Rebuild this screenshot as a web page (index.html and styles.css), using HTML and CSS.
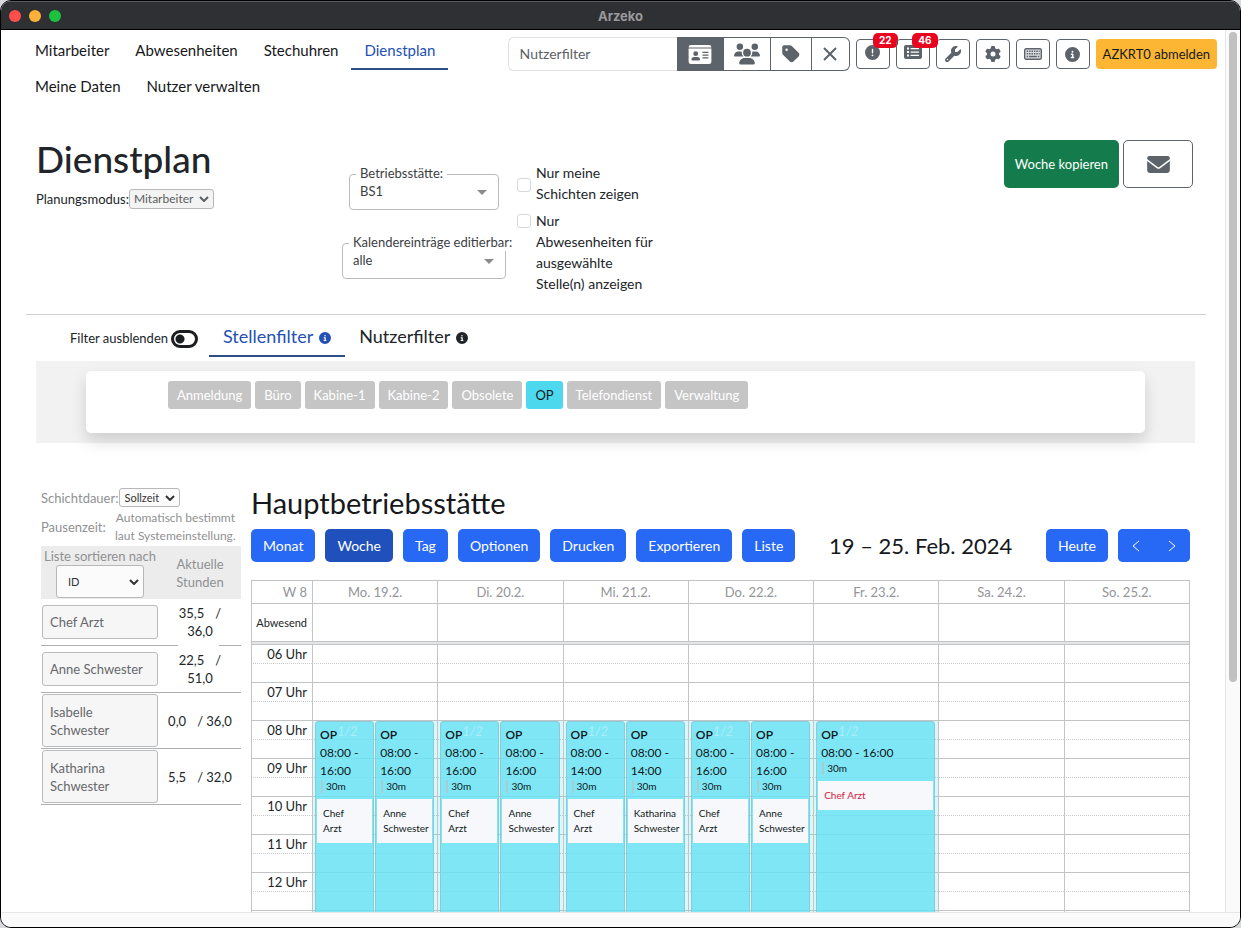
FILE: index.html
```
<!DOCTYPE html>
<html lang="de">
<head>
<meta charset="utf-8">
<title>Arzeko</title>
<link rel="stylesheet" href="styles.css">
</head>
<body>
<svg class="sprite" aria-hidden="true">
  <symbol id="i-info" viewBox="0 0 512 512"><path d="M256 512A256 256 0 1 0 256 0a256 256 0 1 0 0 512zM216 336h24V272H216c-13.3 0-24-10.7-24-24s10.7-24 24-24h48c13.3 0 24 10.7 24 24v88h8c13.3 0 24 10.7 24 24s-10.7 24-24 24H216c-13.3 0-24-10.7-24-24s10.7-24 24-24zm40-208a32 32 0 1 1 0 64 32 32 0 1 1 0-64z"/></symbol>
  <symbol id="i-alert" viewBox="0 0 512 512"><path d="M256 512A256 256 0 1 0 256 0a256 256 0 1 0 0 512zm0-384c13.3 0 24 10.7 24 24V264c0 13.3-10.7 24-24 24s-24-10.7-24-24V152c0-13.3 10.7-24 24-24zM224 352a32 32 0 1 1 64 0 32 32 0 1 1 -64 0z"/></symbol>
  <symbol id="i-wrench" viewBox="0 0 512 512"><path d="M352 320c88.4 0 160-71.6 160-160c0-15.3-2.2-30.1-6.2-44.2c-3.1-10.8-16.4-13.2-24.3-5.3l-76.8 76.8c-3 3-7.1 4.7-11.3 4.7H336c-8.8 0-16-7.2-16-16V118.6c0-4.2 1.7-8.3 4.7-11.3l76.8-76.8c7.9-7.9 5.4-21.2-5.3-24.3C382.1 2.2 367.3 0 352 0C263.6 0 192 71.6 192 160c0 19.1 3.4 37.5 9.5 54.5L19.9 396.1C7.2 408.8 0 426.1 0 444.1C0 481.6 30.4 512 67.9 512c18 0 35.3-7.2 48-19.9L297.5 310.5c17 6.2 35.4 9.5 54.5 9.5zM80 408a24 24 0 1 1 0 48 24 24 0 1 1 0-48z"/></symbol>
  <symbol id="i-gear" viewBox="0 0 512 512"><path d="M495.9 166.6c3.2 8.7 .5 18.4-6.4 24.6l-43.3 39.4c1.1 8.3 1.7 16.8 1.7 25.4s-.6 17.1-1.7 25.4l43.3 39.4c6.9 6.2 9.6 15.9 6.4 24.6c-4.4 11.9-9.7 23.3-15.8 34.3l-4.7 8.1c-6.6 11-14 21.4-22.1 31.2c-5.9 7.2-15.7 9.6-24.5 6.8l-55.7-17.7c-13.4 10.3-28.2 18.9-44 25.4l-12.5 57.1c-2 9.1-9 16.3-18.2 17.8c-13.8 2.3-28 3.5-42.5 3.5s-28.7-1.2-42.5-3.5c-9.2-1.5-16.2-8.7-18.2-17.8l-12.5-57.1c-15.8-6.5-30.6-15.1-44-25.4L83.1 425.9c-8.8 2.8-18.6 .3-24.5-6.8c-8.1-9.8-15.5-20.2-22.1-31.2l-4.7-8.1c-6.1-11-11.4-22.4-15.8-34.3c-3.2-8.7-.5-18.4 6.4-24.6l43.3-39.4C64.6 273.1 64 264.6 64 256s.6-17.1 1.7-25.4L22.4 191.2c-6.9-6.2-9.6-15.9-6.4-24.6c4.4-11.9 9.7-23.3 15.8-34.3l4.7-8.1c6.6-11 14-21.4 22.1-31.2c5.9-7.2 15.7-9.6 24.5-6.8l55.7 17.7c13.4-10.3 28.2-18.9 44-25.4l12.5-57.1c2-9.1 9-16.3 18.2-17.8C227.3 1.2 241.5 0 256 0s28.7 1.2 42.5 3.5c9.2 1.5 16.2 8.7 18.2 17.8l12.5 57.1c15.8 6.5 30.6 15.1 44 25.4l55.7-17.7c8.8-2.8 18.6-.3 24.5 6.8c8.1 9.8 15.5 20.2 22.1 31.2l4.7 8.1c6.1 11 11.4 22.4 15.8 34.3zM256 336a80 80 0 1 0 0-160 80 80 0 1 0 0 160z"/></symbol>
  <symbol id="i-tag" viewBox="0 0 448 512"><path d="M0 80V229.5c0 17 6.7 33.3 18.7 45.3l176 176c25 25 65.5 25 90.5 0L418.7 317.3c25-25 25-65.5 0-90.5l-176-176c-12-12-28.3-18.7-45.3-18.7H48C21.5 32 0 53.5 0 80zm112 32a32 32 0 1 1 0 64 32 32 0 1 1 0-64z"/></symbol>
  <symbol id="i-mail" viewBox="0 64 512 384"><path d="M48 64C21.5 64 0 85.5 0 112c0 15.1 7.1 29.3 19.2 38.4L236.8 313.6c11.4 8.5 27 8.5 38.4 0L492.8 150.4c12.1-9.1 19.2-23.3 19.2-38.4c0-26.5-21.5-48-48-48H48zM0 176V384c0 35.3 28.7 64 64 64H448c35.3 0 64-28.7 64-64V176L294.4 339.2c-22.8 17.1-54 17.1-76.8 0L0 176z"/></symbol>
  <symbol id="i-card" viewBox="0 0 24 20"><path fill-rule="evenodd" d="M2.500 0h19A2.500 2.500 0 0 1 24 2.500H0A2.500 2.500 0 0 1 2.500 0zM0 3.700h24v13.800a2.500 2.500 0 0 1-2.500 2.500h-19A2.500 2.500 0 0 1 0 17.500zM7.500 6.500a2.600 2.600 0 1 0 0 5.200 2.600 2.600 0 0 0 0-5.200zM5.800 12.700A2.800 2.800 0 0 0 3 15.500c0 .4.300.7.700.7h7.600c.4 0 .7-.3.700-.7a2.800 2.800 0 0 0-2.800-2.800zM14.600 7v1.300h6.300V7zM14.600 10v1.300h6.300V10zM14.600 13v1.300h6.300V13z"/></symbol>
  <symbol id="i-users" viewBox="0 0 640 512"><path d="M144 0a80 80 0 1 1 0 160A80 80 0 1 1 144 0zM512 0a80 80 0 1 1 0 160A80 80 0 1 1 512 0zM0 298.700C0 239.800 47.800 192 106.700 192h42.700c15.900 0 31 3.500 44.600 9.700c-1.300 7.200-1.900 14.700-1.900 22.300c0 38.200 16.800 72.500 43.300 96H21.300C9.600 320 0 310.400 0 298.700zM405.300 320c26.600-23.500 43.300-57.800 43.300-96c0-7.600-.7-15-1.900-22.300c13.600-6.300 28.700-9.700 44.600-9.700h42.700C592.200 192 640 239.800 640 298.700c0 11.800-9.600 21.300-21.300 21.300H405.300zM224 224a96 96 0 1 1 192 0 96 96 0 1 1 -192 0zM128 485.300C128 411.700 187.700 352 261.300 352H378.700C452.300 352 512 411.700 512 485.300c0 14.700-11.900 26.700-26.700 26.700H154.700c-14.700 0-26.700-11.900-26.700-26.700z"/></symbol>
  <symbol id="i-list" viewBox="0 0 18 14"><path fill-rule="evenodd" d="M2 0h14a2 2 0 0 1 2 2v10a2 2 0 0 1-2 2H2a2 2 0 0 1-2-2V2a2 2 0 0 1 2-2zM3 2.600v2h2v-2zM3 6v2h2V6zM3 9.400v2h2v-2zM6.600 3v1.300H15V3zM6.600 6.400v1.300H15V6.400zM6.600 9.800v1.300H15V9.800z"/></symbol>
  <symbol id="i-keys" viewBox="0 0 18 12"><rect x=".7" y=".7" width="16.600" height="10.600" rx="1.500" fill="#dcdedf" stroke="currentColor" stroke-width="1.400"/><path fill="none" stroke="currentColor" stroke-width="1.500" stroke-dasharray="1.500 .9" d="M2.700 3.300h13M2.700 5.800h13"/><path fill="none" stroke="currentColor" stroke-width="1.500" d="M2.700 8.600h1.500M5.100 8.600h7.800M13.800 8.600h1.500"/></symbol>
  <symbol id="i-chev" viewBox="0 0 10 6"><path d="M1 1l4 4 4-4" fill="none" stroke="currentColor" stroke-width="2"/></symbol>
  <symbol id="i-caret" viewBox="0 0 10 5"><path d="M0 0h10L5 5z"/></symbol>
</svg>
<div class="window">
  <header class="titlebar">
    <div class="lights"><i class="red"></i><i class="yellow"></i><i class="green"></i></div>
    <span>Arzeko</span>
  </header>
  <div class="viewport">
    <main class="page">
      <div class="topbar">
        <nav class="nav">
          <a href="#">Mitarbeiter</a><a href="#">Abwesenheiten</a><a href="#">Stechuhren</a><a href="#" class="active">Dienstplan</a><a href="#">Meine Daten</a><a href="#">Nutzer verwalten</a>
        </nav>
        <div class="tools">
          <div class="group">
            <input type="text" placeholder="Nutzerfilter" aria-label="Nutzerfilter">
            <button class="on w-card" aria-label="Karte"><svg width="24" height="19"><use href="#i-card"/></svg></button>
            <button class="w-users" aria-label="Gruppen"><svg width="26" height="22"><use href="#i-users"/></svg></button>
            <button class="w-tag" aria-label="Tag"><svg width="18" height="20"><use href="#i-tag"/></svg></button>
            <button class="w-close" aria-label="Leeren"><svg width="14" height="14" viewBox="0 0 14 14"><path d="M1 1l12 12M13 1L1 13" stroke="currentColor" stroke-width="2"/></svg></button>
          </div>
          <button class="tool has-badge" aria-label="Hinweise"><svg width="15" height="15"><use href="#i-alert"/></svg><span class="badge">22</span></button>
          <button class="tool has-badge" aria-label="Aufgaben"><svg width="18" height="14"><use href="#i-list"/></svg><span class="badge">46</span></button>
          <button class="tool" aria-label="Werkzeuge"><svg width="16" height="16"><use href="#i-wrench"/></svg></button>
          <button class="tool" aria-label="Einstellungen"><svg width="16" height="16"><use href="#i-gear"/></svg></button>
          <button class="tool" aria-label="Tastatur"><svg width="18" height="12"><use href="#i-keys"/></svg></button>
          <button class="tool" aria-label="Info"><svg width="15" height="15"><use href="#i-info"/></svg></button>
          <button class="logout">AZKRT0 abmelden</button>
        </div>
      </div>

      <section class="head">
        <div class="head-title">
          <h1>Dienstplan</h1>
          <div class="mode"><label for="mode">Planungsmodus:</label><span class="pick small grey"><select id="mode"><option>Mitarbeiter</option></select><svg width="10" height="6"><use href="#i-chev"/></svg></span></div>
        </div>
        <div class="fields">
          <div class="field site"><label for="site">Betriebsstätte:</label><select id="site"><option>BS1</option></select><svg width="10" height="5"><use href="#i-caret"/></svg></div>
          <div class="field edit"><label for="edit">Kalendereinträge editierbar:</label><select id="edit"><option>alle</option></select><svg width="10" height="5"><use href="#i-caret"/></svg></div>
        </div>
        <div class="checks">
          <label class="mid"><input type="checkbox"><span>Nur meine<br>Schichten zeigen</span></label>
          <label><input type="checkbox"><span>Nur<br>Abwesenheiten für<br>ausgewählte<br>Stelle(n) anzeigen</span></label>
        </div>
        <div class="head-actions">
          <button class="copy">Woche kopieren</button>
          <button class="mail" aria-label="E-Mail"><svg width="23" height="17"><use href="#i-mail"/></svg></button>
        </div>
      </section>

      <section class="filters">
        <div class="filter-head">
          <label class="switch">Filter ausblenden <input type="checkbox" role="switch"></label>
          <a href="#" class="tab active">Stellenfilter <svg width="12" height="12"><use href="#i-info"/></svg></a>
          <a href="#" class="tab">Nutzerfilter <svg width="12" height="12"><use href="#i-info"/></svg></a>
        </div>
        <div class="filter-panel"><div class="chips">
          <button>Anmeldung</button><button>Büro</button><button>Kabine-1</button><button>Kabine-2</button><button>Obsolete</button><button class="on">OP</button><button>Telefondienst</button><button>Verwaltung</button>
        </div></div>
      </section>

      <section class="plan">
        <aside class="staff">
          <div class="opt"><label for="dur">Schichtdauer:</label><span class="pick tiny"><select id="dur"><option>Sollzeit</option></select><svg width="10" height="6"><use href="#i-chev"/></svg></span></div>
          <div class="opt pause"><span>Pausenzeit:</span><p>Automatisch bestimmt<br>laut Systemeinstellung.</p></div>
          <table class="people">
            <thead><tr>
              <th><label for="sort">Liste sortieren nach</label><span class="pick big"><select id="sort"><option>ID</option></select><svg width="10" height="6"><use href="#i-chev"/></svg></span></th>
              <th>Aktuelle<br>Stunden</th>
            </tr></thead>
            <tbody>
              <tr class="one cut"><td><button>Chef Arzt</button></td><td><span class="sum">35,5</span>/<br>36,0</td></tr>
              <tr class="one"><td><button>Anne Schwester</button></td><td><span class="sum">22,5</span>/<br>51,0</td></tr>
              <tr><td><button>Isabelle<br>Schwester</button></td><td><span class="sum">0,0</span>/ 36,0</td></tr>
              <tr><td><button>Katharina<br>Schwester</button></td><td><span class="sum">5,5</span>/ 32,0</td></tr>
            </tbody>
          </table>
        </aside>

        <div class="calendar">
          <h2>Hauptbetriebsstätte</h2>
          <div class="cal-bar">
            <div class="btns"><button>Monat</button><button class="on">Woche</button><button>Tag</button><button>Optionen</button><button>Drucken</button><button>Exportieren</button><button>Liste</button></div>
            <h3>19 – 25. Feb. 2024</h3>
            <div class="btns"><button>Heute</button><div class="arrows"><button aria-label="Zurück"><svg width="8" height="12" viewBox="0 0 8 12"><path d="M7 1L1 6l6 5"/></svg></button><button aria-label="Weiter"><svg width="8" height="12" viewBox="0 0 8 12"><path d="M1 1l6 5-6 5"/></svg></button></div></div>
          </div>
          <table class="week">
            <colgroup><col class="axis"><col><col><col><col><col><col><col></colgroup>
            <thead>
              <tr class="days"><th>W 8</th><th>Mo. 19.2.</th><th>Di. 20.2.</th><th>Mi. 21.2.</th><th>Do. 22.2.</th><th>Fr. 23.2.</th><th>Sa. 24.2.</th><th>So. 25.2.</th></tr>
              <tr class="absent"><th>Abwesend</th><td></td><td></td><td></td><td></td><td></td><td></td><td></td></tr>
              <tr class="divider"><td colspan="8"></td></tr>
            </thead>
            <tbody>
              <tr><th>06 Uhr</th><td></td><td></td><td></td><td></td><td></td><td></td><td></td></tr>
              <tr class="half"><th></th><td></td><td></td><td></td><td></td><td></td><td></td><td></td></tr>
              <tr><th>07 Uhr</th><td></td><td></td><td></td><td></td><td></td><td></td><td></td></tr>
              <tr class="half"><th></th><td></td><td></td><td></td><td></td><td></td><td></td><td></td></tr>
              <tr class="shifts"><th>08 Uhr</th>
                <td><div class="lane">
                  <article><header><b>OP</b><i>1/2</i></header><time>08:00 -<br>16:00</time><small>30m</small><p>Chef<br>Arzt</p></article>
                  <article><header><b>OP</b></header><time>08:00 -<br>16:00</time><small>30m</small><p>Anne Schwester</p></article></div></td>
                <td><div class="lane">
                  <article><header><b>OP</b><i>1/2</i></header><time>08:00 -<br>16:00</time><small>30m</small><p>Chef<br>Arzt</p></article>
                  <article><header><b>OP</b></header><time>08:00 -<br>16:00</time><small>30m</small><p>Anne Schwester</p></article></div></td>
                <td><div class="lane">
                  <article><header><b>OP</b><i>1/2</i></header><time>08:00 -<br>14:00</time><small>30m</small><p>Chef<br>Arzt</p></article>
                  <article><header><b>OP</b></header><time>08:00 -<br>14:00</time><small>30m</small><p>Katharina Schwester</p></article></div></td>
                <td><div class="lane">
                  <article><header><b>OP</b><i>1/2</i></header><time>08:00 -<br>16:00</time><small>30m</small><p>Chef<br>Arzt</p></article>
                  <article><header><b>OP</b></header><time>08:00 -<br>16:00</time><small>30m</small><p>Anne Schwester</p></article></div></td>
                <td><div class="lane">
                  <article><header><b>OP</b><i>1/2</i></header><time>08:00 - 16:00</time><small>30m</small><p class="warn">Chef Arzt</p></article></div></td>
                <td></td><td></td></tr>
              <tr class="half"><th></th><td></td><td></td><td></td><td></td><td></td><td></td><td></td></tr>
              <tr><th>09 Uhr</th><td></td><td></td><td></td><td></td><td></td><td></td><td></td></tr>
              <tr class="half"><th></th><td></td><td></td><td></td><td></td><td></td><td></td><td></td></tr>
              <tr><th>10 Uhr</th><td></td><td></td><td></td><td></td><td></td><td></td><td></td></tr>
              <tr class="half"><th></th><td></td><td></td><td></td><td></td><td></td><td></td><td></td></tr>
              <tr><th>11 Uhr</th><td></td><td></td><td></td><td></td><td></td><td></td><td></td></tr>
              <tr class="half"><th></th><td></td><td></td><td></td><td></td><td></td><td></td><td></td></tr>
              <tr><th>12 Uhr</th><td></td><td></td><td></td><td></td><td></td><td></td><td></td></tr>
              <tr class="half"><th></th><td></td><td></td><td></td><td></td><td></td><td></td><td></td></tr>
              <tr><th></th><td></td><td></td><td></td><td></td><td></td><td></td><td></td></tr>
            </tbody>
          </table>
        </div>
      </section>
    </main>
    <div class="scroll-y"><div class="thumb"></div></div>
    <div class="scroll-x"></div>
  </div>
</div>
</body>
</html>
```
FILE: styles.css
```
* { box-sizing: border-box; }
body {
  margin: 0;
  background: #d8d9dc;
  color: #212529;
  font: 14px/21px Lato, "Noto Sans", sans-serif;
}
button, input, select { font: inherit; color: inherit; margin: 0; }
button { cursor: pointer; padding: 0; border: 0; background: none; }
a { color: inherit; text-decoration: none; }
h1, h2, h3, p { margin: 0; font-weight: 400; }
svg { fill: currentColor; flex: none; }
select { appearance: none; border: 0; background: none; outline: 0; }
.sprite { display: none; }

.window {
  height: 100vh;
  display: flex;
  flex-direction: column;
  border: 1px solid #000;
  border-radius: 11px;
  overflow: hidden;
  background: #fff;
}
.titlebar {
  flex: none;
  height: 29px;
  display: grid;
  grid-template-columns: 1fr auto 1fr;
  align-items: center;
  padding: 0 8px;
  background: #2f3034;
  border-top: 1px solid #5b5c60;
  border-bottom: 1px solid #000;
  color: #98999d;
  font: 700 13px/16px Inter, sans-serif;
}
.lights { display: flex; gap: 8px; }
.lights i { width: 12px; height: 12px; border-radius: 50%; }
.red { background: #fe4f4c; }
.yellow { background: #fdb03a; }
.green { background: #1dc140; }

.viewport {
  flex: 1;
  min-height: 0;
  display: grid;
  grid-template-columns: minmax(0, 1fr) 15px;
  grid-template-rows: minmax(0, 1fr) 15px;
}
.page { overflow: hidden; }
.scroll-y { background: #fafafa; border-left: 1px solid #e6e6e6; padding: 2px 3px; }
.thumb { height: 74%; border-radius: 4px; background: #c1c1c1; }
.scroll-x { grid-column: 1 / -1; background: #fafafa; border-top: 1px solid #e6e6e6; }

.topbar {
  display: flex;
  align-items: flex-start;
  justify-content: space-between;
  padding: 4px 8px 0 21px;
  height: 77px;
}
.nav { display: flex; flex-wrap: wrap; width: 440px; }
.nav a { padding: 6px 13px 7px; line-height: 21px; border-bottom: 2px solid transparent; color: #16181b; font-size: 15px; }
.nav a.active { color: #2450b4; border-color: #2d4f86; }

.tools { display: flex; align-items: center; gap: 6px; padding-top: 3px; }
.group { display: flex; height: 34px; color: #5c636a; }
.group input {
  width: 169px;
  padding: 0 11px 1px;
  border: 1px solid #dee2e6;
  border-right: 0;
  border-radius: 6px 0 0 6px;
}
.group input::placeholder { color: #5b6066; opacity: 1; }
.group button { display: grid; place-items: center; border: 1px solid #5c636a; border-left-width: 0; }
.group .on { background: #5c636a; color: #fff; }
.w-card, .w-users { width: 47px; }
.w-tag { width: 41px; }
.w-close { width: 38px; border-radius: 0 6px 6px 0; }
.tool {
  width: 34px;
  height: 30px;
  display: grid;
  place-items: center;
  border: 1px solid #5c636a !important;
  border-radius: 4px;
  color: #5c636a;
}
.tool.has-badge { position: relative; padding-bottom: 4px; }
.badge {
  position: absolute;
  top: -7px;
  right: -9px;
  padding: 0 6px;
  border-radius: 5px;
  background: #e9051f;
  color: #fff;
  font: 700 10px/15px Inter, sans-serif;
}
.logout { height: 30px; padding: 0 7px; border-radius: 4px; background: #fcb634; color: #16181b; font-size: 13px; }

.head {
  display: grid;
  grid-template-columns: 306px 164px 11px 1fr auto;
  align-items: start;
  margin: 0 19px 0 25px;
  padding: 33px 13px 20px 10px;
  border-bottom: 1px solid #d0d2d4;
}
h1 { font-size: 37px; line-height: 38px; font-weight: 500; }
.mode { display: flex; align-items: center; margin-top: 11px; font-size: 13px; line-height: 20px; }
.pick { display: inline-grid; grid-template-columns: 1fr auto; align-items: center; border: 1px solid #b8b8b8; border-radius: 3px; background: #fbfbfb; color: #333; }
.pick select { grid-area: 1 / 1 / 2 / 3; padding: 0 4px; text-align: left; width: 100%; height: 100%; }
.pick svg { grid-area: 1 / 2; margin-right: 4px; pointer-events: none; }
.pick.small { width: 85px; height: 20px; font-size: 12px; line-height: 16px; }
.pick.grey { background: #f3f3f3; color: #5b5d60; }
.pick.tiny { width: 61px; height: 19px; font-size: 11px; }
.pick.big { width: 88px; height: 33px; font-size: 11px; }
.pick.big select { padding-left: 11px; }

.fields { display: grid; gap: 33px; padding-top: 34px; justify-items: center; }
.field {
  position: relative;
  display: grid;
  grid-template-columns: 1fr auto;
  align-items: center;
  height: 36px;
  border: 1px solid #b9bbbd;
  border-radius: 4px;
  color: #3c4043;
  font-size: 13px;
}
.field.site { width: 150px; }
.field.edit { width: 164px; }
.field label {
  position: absolute;
  top: -11px;
  left: 6px;
  padding: 0 4px;
  background: #fff;
  line-height: 18px;
  white-space: nowrap;
}
.field select { grid-area: 1 / 1 / 2 / 3; width: 100%; height: 34px; padding: 0 10px 1px; }
.field svg { grid-area: 1 / 2; margin-right: 11px; color: #8b8b8b; pointer-events: none; }
.checks { grid-column: 4; display: grid; gap: 6px; padding-top: 22px; justify-items: start; }
.checks label { display: flex; gap: 5px; }
.checks input {
  appearance: none;
  flex: none;
  width: 14px;
  height: 14px;
  margin-top: 4px;
  border: 1px solid #d5d9dd;
  border-radius: 3px;
  background: #fff;
}
.checks .mid input { margin-top: 16px; }
.head-actions { display: flex; gap: 4px; }
.head-actions button { height: 48px; border-radius: 5px; }
.copy { padding: 0 11px; background: #147c4c; color: #fff; font-size: 13px; }
.mail { width: 70px; display: grid; place-items: center; border: 1px solid #5c636a !important; color: #5c636a; }

.filters { margin: 0 30px 0 35px; }
.filter-head { display: flex; align-items: flex-end; padding: 4px 0 4px 34px; height: 46px; }
.switch { display: flex; align-items: center; gap: 3px; font-size: 13px; padding-bottom: 8px; margin-right: 11px; }
.switch input {
  appearance: none;
  width: 27px;
  height: 18px;
  border: 3px solid #1b1d20;
  border-radius: 9px;
  background: radial-gradient(circle at 6px 6px, #1b1d20 4px, #fff 5px);
}
.tab { display: flex; align-items: center; gap: 6px; height: 38px; padding: 0 14px 2px; border-bottom: 2px solid transparent; font-size: 18px; }
.tab svg { margin-top: 4px; }
.tab.active { color: #2450b4; border-color: #2d4f86; }
.filter-panel { padding: 10px 50px; background: #f2f2f2; }
.chips {
  display: flex;
  flex-wrap: wrap;
  gap: 4px;
  padding: 10px 82px 24px;
  border-radius: 5px;
  background: #fff;
  box-shadow: 0 8px 16px rgba(0, 0, 0, .15);
}
.chips button { height: 28px; padding: 0 9px; border-radius: 3px; background: #c5c5c5; color: #fff; font-size: 13px; }
.chips .on { background: #4dd8ee; color: #16181b; }

.plan { display: grid; grid-template-columns: 200px minmax(0, 1fr); gap: 10px; padding: 45px 35px 0 40px; }
.staff { color: #8f9193; font-size: 13px; line-height: 18px; }
.opt { display: flex; align-items: center; gap: 1px; }
.opt.pause { gap: 4px; margin-top: 2px; }
.opt p { flex: 1; text-align: center; font-size: 12px; }
.people { width: 100%; table-layout: fixed; border-collapse: separate; border-spacing: 0; margin-top: 1px; }
.people th { background: #ececec; font-weight: 400; padding: 0; }
.people th:first-child { width: 118px; }
.people th label { display: block; }
.people td { padding: 1px; border-bottom: 1px solid #aeb0b2; text-align: center; color: #212529; }
.people tr { height: 56px; }
.people thead tr { height: 53px; }
.people tr.one { height: 47px; }
.people button {
  width: 116px;
  min-height: 34px;
  padding: 7px;
  border: 1px solid #b9bbbd;
  border-radius: 3px;
  background: #f6f6f6;
  color: #66686b;
  text-align: left;
  line-height: 18px;
  vertical-align: middle;
}
.people tr:not(.one) button { min-height: 53px; }
.people .pick { vertical-align: top; }
.sum { padding-right: 11px; }
.people .cut td:last-child { position: relative; }
.people .cut td:last-child::after {
  content: "";
  position: absolute;
  left: 19px;
  bottom: -1px;
  width: 41px;
  height: 1px;
  background: #fff;
}

h2 { font-size: 29px; line-height: 30px; color: #16181b; }
.cal-bar { display: flex; align-items: center; justify-content: space-between; margin-top: 11px; }
.btns { display: flex; gap: 10px; }
.btns button { height: 33px; padding: 0 12px; border-radius: 5px; background: #2768f5; color: #fff; }
.btns .on { background: #1f50bb; }
h3 { font-size: 22px; line-height: 28px; color: #16181b; }
.arrows { display: flex; border-radius: 5px; background: #2768f5; }
.arrows button { width: 36px; display: grid; place-items: center; }
.arrows path { fill: none; stroke: #fff; stroke-width: 1; }

.week {
  width: 100%;
  margin-top: 18px;
  table-layout: fixed;
  border-collapse: separate;
  border-spacing: 0;
  border-right: 1px solid #c2c4c6;
}
.week .axis { width: 61px; }
.week th, .week td { height: 19px; padding: 0; border: 0 solid #c2c4c6; border-width: 1px 0 0 1px; font-weight: 400; }
.week tr > th:first-child { text-align: right; padding-right: 5px; font-size: 13px; line-height: 18px; }
.week .half > * { border-top: 1px dotted #c8cacc; }
.week .days th { height: 23px; color: #939598; font-size: 13px; line-height: 22px; }
.week .absent > * { height: 38px; }
.week .absent th:first-child { font-size: 11px; }
.week .divider td { height: 3px; background: #e4e5e6; }
.week .shifts td { position: relative; }
.lane {
  position: absolute;
  top: 0;
  left: 0;
  right: 0;
  height: 304px;
  display: grid;
  grid-auto-flow: column;
  grid-auto-columns: minmax(0, 1fr);
  gap: 1px;
  padding: 0 3px 0 2px;
  background: rgba(77, 216, 238, .2);
}
.lane article {
  display: flex;
  flex-direction: column;
  padding-top: 4px;
  border: 1px solid #8ccbd5;
  border-radius: 3px;
  background: rgba(106, 226, 243, .82);
  color: #101820;
  font-size: 12px;
  line-height: 18px;
}
.lane header { display: flex; padding-left: 4px; }
.lane header i { color: rgba(255, 255, 255, .35); font-size: 13px; line-height: 10px; }
.lane b { font-weight: 600; }
.lane time { padding-left: 4px; }
.lane small { margin: 0 0 6px 5px; padding-left: 3px; border-left: 2px solid #a9ccd2; font-size: 10px; line-height: 13px; }
.lane p { margin: 0 1px; padding: 7px 0 7px 6px; background: #f7f8fb; font-size: 10px; line-height: 15px; }
.lane .warn { color: #d3203c; }
```
